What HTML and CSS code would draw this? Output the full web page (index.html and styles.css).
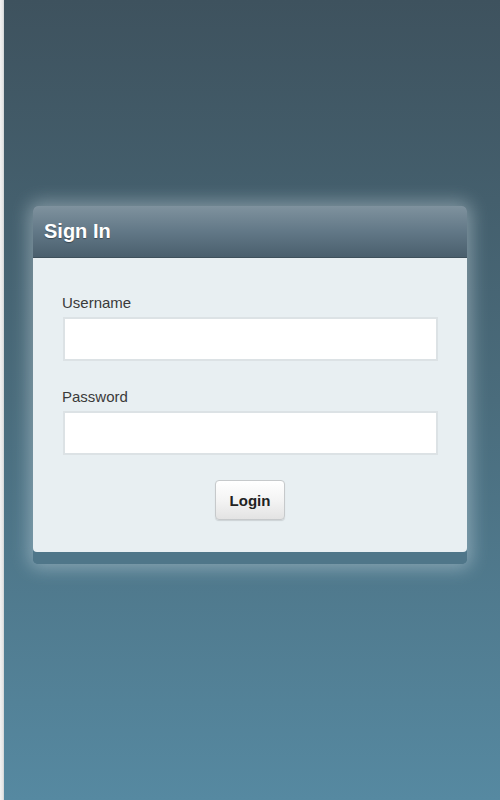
FILE: index.html
```html
<!DOCTYPE html>
<html lang="en">
<head>
  <meta charset="UTF-8" />
  <meta name="viewport" content="width=device-width, initial-scale=1" />
  <title>Sign In</title>
  <link rel="stylesheet" href="styles.css">
</head>
<body>
  <div class="edge"></div>
  <div class="page">
    <div class="login-box">
      <div class="login-head">Sign In</div>
      <form class="login-body" autocomplete="off">
        <label for="username">Username</label>
        <input type="text" id="username" name="username" />

        <label for="password">Password</label>
        <input type="password" id="password" name="password" />

        <div class="actions">
          <button type="submit">Login</button>
        </div>
      </form>
      <div class="login-foot"></div>
    </div>
  </div>
</body>
</html>
```

FILE: styles.css
```css
html, body {
  height: 100%;
}
body {
  font-family: "Liberation Sans", Arial, sans-serif;
  margin: 0;
  display: flex;
  background: #3f5561;
}
.edge {
  width: 4px;
  background: linear-gradient(to right, #f2f2f2 0, #e4e4e4 3px, #c9cfd2 4px);
}
.page {
  flex: 1;
  background: linear-gradient(to bottom, #3e525e 0%, #4a6c7c 50%, #5689a1 100%);
  padding: 206px 29px 0 29px;
}
.login-box {
  width: 434px;
  border-radius: 5px;
  box-shadow: 0 0 18px 4px rgba(235, 245, 250, 0.38);
}
.login-head {
  height: 52px;
  box-sizing: border-box;
  padding: 14px 11px 0;
  border-radius: 5px 5px 0 0;
  background: linear-gradient(to bottom, #7f929e 0%, #627887 50%, #4a5f6d 100%);
  border-bottom: 1px solid #3e505b;
  color: #fff;
  font-size: 20px;
  font-weight: bold;
  text-shadow: 0 1px 1px rgba(0, 0, 0, 0.35);
}
.login-body {
  background: #e8eff2;
  padding: 36px 29px 32px 29px;
  margin: 0;
  border-radius: 0 0 4px 4px;
}
label {
  display: block;
  font-size: 15px;
  color: #3a3a3a;
  margin: 0 0 6px 0;
}
input[type="text"], input[type="password"] {
  display: block;
  box-sizing: border-box;
  width: 375px;
  height: 44px;
  margin: 0 0 27px 1px;
  border: 2px solid #dce2e5;
  background: #fff;
  font-size: 15px;
  padding: 8px;
}
input[type="password"] {
  margin-bottom: 25px;
}
.actions {
  display: flex;
  justify-content: center;
}
button {
  width: 70px;
  height: 40px;
  border: 1px solid #c6c9cb;
  border-radius: 4px;
  background: linear-gradient(to bottom, #ffffff 0%, #f4f4f4 50%, #e3e3e3 100%);
  box-shadow: 0 1px 1px rgba(0, 0, 0, 0.12);
  font-family: "Liberation Sans", Arial, sans-serif;
  font-size: 15px;
  font-weight: bold;
  color: #222;
  cursor: pointer;
}
.login-foot {
  height: 12px;
  background: #4f7689;
  border-radius: 0 0 5px 5px;
}
```
